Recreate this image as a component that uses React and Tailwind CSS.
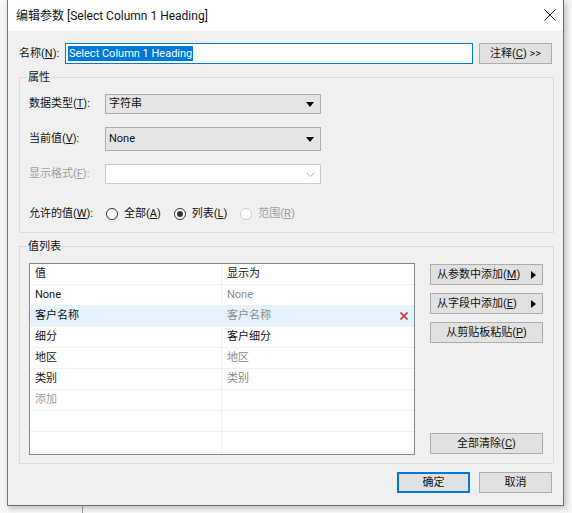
import React from 'react'

const Caret = ({ color = '#000' }) => (
  <svg width="8" height="5" viewBox="0 0 8 5">
    <path d="M0 0h8L4 5z" fill={color} />
  </svg>
)

const RightTri = () => (
  <svg width="5" height="8" viewBox="0 0 5 8">
    <path d="M0 0v8l5-4z" fill="#000" />
  </svg>
)

const Combo = ({ value, h = 'h-[20px]' }) => (
  <div className={`w-[216px] ${h} flex items-center justify-between border border-[#adadad] bg-[#e5e5e5] pl-[3px] pr-[6px]`}>
    <span>{value}</span>
    <Caret />
  </div>
)

const Radio = ({ checked, disabled, label, u }) => (
  <label className={`flex items-center gap-[6px] ${disabled ? 'text-[#a0a0a0]' : 'text-[#111]'}`}>
    <span className={`w-[12px] h-[12px] rounded-full border flex items-center justify-center bg-white ${disabled ? 'border-[#cccccc]' : 'border-[#333333]'}`}>
      {checked && <span className="w-[6px] h-[6px] rounded-full bg-[#333333]" />}
    </span>
    <span>{label}(<u>{u}</u>)</span>
  </label>
)

const Btn = ({ children, className = '', between = false }) => (
  <button className={`h-[21px] whitespace-nowrap border border-[#adadad] bg-[#e1e1e1] flex items-center ${between ? 'justify-between' : 'justify-center'} ${className}`}>
    {children}
  </button>
)

const rows = [
  { v: 'None', d: 'None', grey: true },
  { v: '客户名称', d: '客户名称', grey: true, sel: true },
  { v: '细分', d: '客户细分' },
  { v: '地区', d: '地区', grey: true },
  { v: '类别', d: '类别', grey: true },
  { v: '添加', d: '', add: true },
  { v: '', d: '' },
  { v: '', d: '' },
]

export default function App() {
  return (
    <div className="w-[572px] h-[513px] bg-[#f7f7f7] overflow-hidden text-[11px] leading-[16px] text-[#111] font-['Roboto','Noto_Sans_CJK_SC',sans-serif] relative">
      {/* background app line below the dialog */}
      <div className="absolute left-[82px] top-[500px] w-px h-[13px] bg-[#a0a0a0]" />
      <div className="relative ml-[7px] w-[557px] h-[506px] border-x border-b border-[#6f6f6f] flex flex-col shadow-[2px_2px_6px_rgba(0,0,0,0.25)]">
        <div className="h-[31px] bg-white flex items-center justify-between pl-[8px] pr-[7px]">
          <span className="text-[12px]">编辑参数 [Select Column 1 Heading]</span>
          <svg width="12" height="12" viewBox="0 0 12 12" className="mt-[-2px]">
            <path d="M0.5 0.5l11 11M11.5 0.5l-11 11" stroke="#111" strokeWidth="1" />
          </svg>
        </div>

        <div className="flex-1 bg-[#f0f0f0] pl-[11px] pr-[9px] pt-[12px] flex flex-col">
          <div className="flex items-center h-[21px] pr-[2px]">
            <span className="w-[46px] whitespace-nowrap">名称(<u>N</u>):</span>
            <div className="w-[408px] h-[21px] border border-[#0078d7] bg-white flex items-center pl-[2px]">
              <span className="bg-[#0078d7] text-white leading-[15px] px-px">Select Column 1 Heading</span>
            </div>
            <Btn className="ml-[6px] w-[73px]">注释(<u>C</u>) &gt;&gt;</Btn>
          </div>

          {/* 属性 */}
          <div className="mt-[13px] border border-[#dcdcdc] pl-[9px] pb-[8px]">
            <div className="-mt-[8px] -ml-[2px] w-fit px-[1px] h-[16px] bg-[#f0f0f0]">属性</div>
            <div className="mt-[8px] flex items-center">
              <span className="w-[76px]">数据类型(<u>T</u>):</span>
              <Combo value="字符串" />
            </div>
            <div className="mt-[13px] flex items-center">
              <span className="w-[76px]">当前值(<u>V</u>):</span>
              <Combo value="None" h="h-[24px]" />
            </div>
            <div className="mt-[13px] flex items-center">
              <span className="w-[76px] text-[#a0a0a0]">显示格式(<u>F</u>):</span>
              <div className="w-[216px] h-[20px] border border-[#cccccc] bg-white flex items-center justify-end pr-[5px]">
                <svg width="9" height="5" viewBox="0 0 9 5">
                  <path d="M0.5 0.5l4 4 4-4" stroke="#b0b0b0" fill="none" />
                </svg>
              </div>
            </div>
            <div className="mt-[20px] h-[20px] flex items-center">
              <span className="w-[77px]">允许的值(<u>W</u>):</span>
              <div className="flex items-center gap-[13px]">
                <Radio label="全部" u="A" />
                <Radio label="列表" u="L" checked />
                <Radio label="范围" u="R" disabled />
              </div>
            </div>
          </div>

          {/* 值列表 */}
          <div className="mt-[13px] border border-[#dcdcdc] pl-[9px] pr-[10px] pb-[8px]">
            <div className="-mt-[8px] -ml-[2px] w-fit px-[1px] h-[16px] bg-[#f0f0f0]">值列表</div>
            <div className="mt-[8px] flex">
              <div className="w-[386px] h-[192px] border border-[#828790] bg-white flex flex-col">
                <div className="h-[21px] flex border-b border-[#f0f0f0]">
                  <div className="w-[192px] pl-[5px] flex items-center border-r border-[#f0f0f0]">值</div>
                  <div className="flex-1 pl-[5px] flex items-center">显示为</div>
                </div>
                {rows.map((r, i) => (
                  <div key={i} className={`h-[21px] flex border-b border-[#f0f0f0] ${r.sel ? 'bg-[#e5f3ff]' : ''}`}>
                    <div className={`w-[192px] pl-[5px] flex items-center border-r border-[#f0f0f0] ${r.add ? 'text-[#a0a0a0]' : ''}`}>{r.v}</div>
                    <div className={`flex-1 pl-[5px] pr-[6px] flex items-center justify-between ${r.grey ? 'text-[#8a8a8a]' : ''}`}>
                      <span>{r.d}</span>
                      {r.sel && (
                        <svg width="8" height="8" viewBox="0 0 8 8">
                          <path d="M0.5 0.5l7 7M7.5 0.5l-7 7" stroke="#d6353b" strokeWidth="1.6" />
                        </svg>
                      )}
                    </div>
                  </div>
                ))}
              </div>
              <div className="ml-[15px] w-[113px] flex flex-col pt-[1px] pb-[1px]">
                <Btn between className="w-full pl-[6px] pr-[6px]">
                  <span>从参数中添加(<u>M</u>)</span>
                  <RightTri />
                </Btn>
                <Btn between className="w-full mt-[8px] pl-[6px] pr-[6px]">
                  <span>从字段中添加(<u>E</u>)</span>
                  <RightTri />
                </Btn>
                <Btn className="w-full mt-[8px]">从剪贴板粘贴(<u>P</u>)</Btn>
                <Btn className="w-full mt-auto">全部清除(<u>C</u>)</Btn>
              </div>
            </div>
          </div>

          <div className="mt-[8px] flex justify-end gap-[9px] pr-[2px]">
            <button className="w-[73px] h-[21px] border-2 border-[#0078d7] bg-[#e1e1e1] flex items-center justify-center">确定</button>
            <Btn className="w-[73px]">取消</Btn>
          </div>
        </div>
      </div>
    </div>
  )
}
